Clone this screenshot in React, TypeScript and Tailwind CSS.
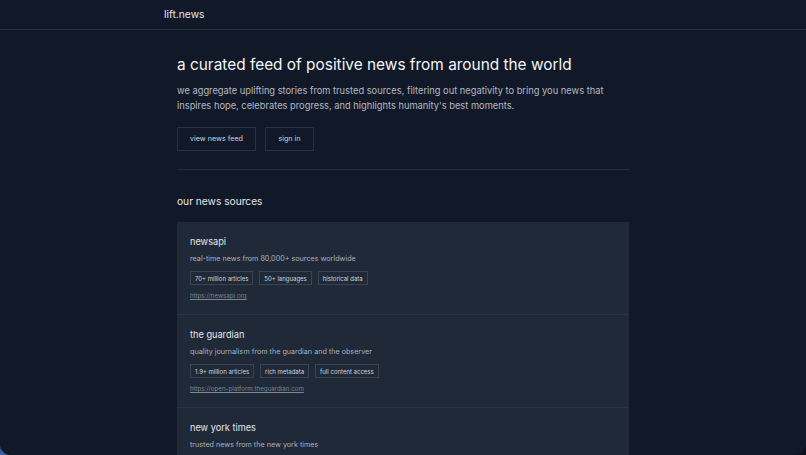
const sources = [
  {
    name: 'newsapi',
    desc: 'real-time news from 80,000+ sources worldwide',
    tags: ['70+ million articles', '50+ languages', 'historical data'],
    url: 'https://newsapi.org',
  },
  {
    name: 'the guardian',
    desc: 'quality journalism from the guardian and the observer',
    tags: ['1.9+ million articles', 'rich metadata', 'full content access'],
    url: 'https://open-platform.theguardian.com',
  },
  {
    name: 'new york times',
    desc: 'trusted news from the new york times',
    tags: [] as string[],
    url: '',
  },
];

export default function App() {
  return (
    <div className="h-[455px] w-[806px] overflow-hidden bg-[radial-gradient(circle_at_0%_100%,#3b6fb5_0px,#1b2438_14px,#0b0f18_30px)]">
      <div className="h-full overflow-hidden rounded-b-[11px] bg-[#111827] font-['Inter',sans-serif] text-[#e5e7eb]">
        <header className="border-b border-[#252d3b]">
          <div className="mx-auto flex h-[29px] w-[478px] items-center">
            <span className="text-[10.3px] text-[#e5e7eb]">lift.news</span>
          </div>
        </header>

        <main className="mx-auto w-[452px] pt-[24px]">
          <h1 className="text-[15.4px] leading-[22px] text-[#f3f4f6]">
            a curated feed of positive news from around the world
          </h1>
          <p className="mt-[7px] text-[9.3px] leading-[15px] text-[#b4bac4]">
            we aggregate uplifting stories from trusted sources, filtering out negativity to bring you news that inspires hope, celebrates progress, and highlights humanity's best moments.
          </p>
          <div className="mt-[14px] flex gap-[9px]">
            <button className="h-[24px] w-[79px] border border-[#2a3140] text-[7.2px] text-[#d1d5db]">view news feed</button>
            <button className="h-[24px] w-[49px] border border-[#2a3140] text-[7.2px] text-[#d1d5db]">sign in</button>
          </div>

          <div className="mt-[18px] border-t border-[#252d3b]" />

          <h2 className="mt-[23px] text-[10.2px] leading-[16px] text-[#e5e7eb]">our news sources</h2>

          <div className="mt-[13px] bg-[#1f2937]">
            {sources.map((s, i) => (
              <div key={s.name} className={`px-[13px] pt-[13px] pb-[13px] ${i > 0 ? 'border-t border-[#2a3343]' : ''}`}>
                <div className="text-[9.2px] leading-[14px] text-[#e5e7eb]">{s.name}</div>
                <div className="mt-[4px] text-[7.2px] leading-[12px] text-[#aab1bc]">{s.desc}</div>
                {s.tags.length > 0 && (
                  <div className="mt-[6px] flex gap-[6px]">
                    {s.tags.map(t => (
                      <span key={t} className="flex h-[14px] items-center border border-[#3a4352] px-[4px] text-[6px] text-[#d1d5db]">{t}</span>
                    ))}
                  </div>
                )}
                {s.url && (
                  <a className="mt-[6px] block text-[6.2px] leading-[10px] text-[#7d8594] underline">{s.url}</a>
                )}
              </div>
            ))}
          </div>
        </main>
      </div>
    </div>
  );
}
